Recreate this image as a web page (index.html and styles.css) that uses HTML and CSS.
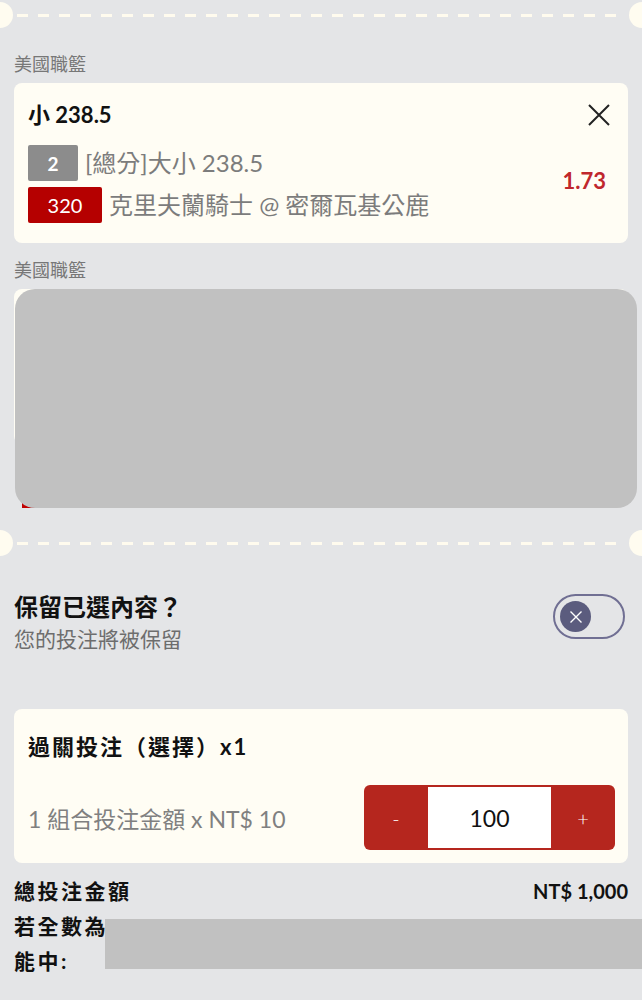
FILE: index.html
```html
<!DOCTYPE html>
<html lang="zh-Hant">
<head>
<meta charset="utf-8">
<link rel="stylesheet" href="styles.css">
</head>
<body>
<div class="divider"><span class="notch notch-l"></span><span class="dash"></span><span class="notch notch-r"></span></div>

<div class="section">
  <div class="league">美國職籃</div>
  <div class="card bet">
    <div class="bet-head">
      <div class="bet-title">小 238.5</div>
      <svg class="close" width="22" height="22" viewBox="0 0 22 22"><path d="M1 1 L21 21 M21 1 L1 21" stroke="#222" stroke-width="2" fill="none"/></svg>
    </div>
    <div class="bet-body">
      <div class="bet-rows">
        <div class="bet-row"><span class="badge badge-gray">2</span><span class="bet-text">[總分]大小 238.5</span></div>
        <div class="bet-row"><span class="badge badge-red">320</span><span class="bet-text">克里夫蘭騎士 @ 密爾瓦基公鹿</span></div>
      </div>
      <div class="odds">1.73</div>
    </div>
  </div>

  <div class="league league-2">美國職籃</div>
  <div class="masked">
    <div class="card bet">
      <div class="bet-head">
        <div class="bet-title">大 238.5</div>
      </div>
      <div class="bet-body">
        <div class="bet-rows">
          <div class="bet-row"><span class="badge badge-gray">2</span><span class="bet-text">[總分]大小 238.5</span></div>
        </div>
      </div>
    </div>
    <span class="peek"></span>
    <div class="mask"></div>
  </div>
</div>

<div class="divider divider-2"><span class="notch notch-l"></span><span class="dash"></span><span class="notch notch-r"></span></div>

<div class="section">
  <div class="keep">
    <div class="keep-text">
      <div class="keep-title">保留已選內容？</div>
      <div class="keep-sub">您的投注將被保留</div>
    </div>
    <div class="toggle">
      <span class="knob"><svg width="14" height="14" viewBox="0 0 14 14"><path d="M1.5 1.5 L12.5 12.5 M12.5 1.5 L1.5 12.5" stroke="#fff" stroke-width="1.4" fill="none"/></svg></span>
    </div>
  </div>

  <div class="card parlay">
    <div class="parlay-title">過關投注（選擇）x1</div>
    <div class="parlay-row">
      <div class="parlay-text">1 組合投注金額 x NT$ 10</div>
      <div class="stepper">
        <span class="step-btn">-</span>
        <span class="step-val">100</span>
        <span class="step-btn">+</span>
      </div>
    </div>
  </div>

  <div class="summary">
    <div class="sum-row"><span class="sum-label">總投注金額</span><span class="sum-val">NT$ 1,000</span></div>
    <div class="win">
      <div class="sum-label">若全數為</div>
      <div class="sum-label">能中:</div>
      <div class="win-mask"></div>
    </div>
  </div>
</div>
</body>
</html>
```

FILE: styles.css
```css
* { box-sizing: border-box; }
html, body {
  margin: 0;
  padding: 0;
  background: #e4e5e7;
  font-family: Lato, "Noto Sans CJK TC", sans-serif;
  color: #111;
  overflow: hidden;
}
.divider {
  height: 30px;
  display: flex;
  align-items: center;
}
.divider-2 { margin-top: 20px; }
.notch {
  width: 26px;
  height: 26px;
  border-radius: 50%;
  background: #fffcf0;
  flex: none;
}
.notch-l { margin-left: -13px; }
.notch-r { margin-right: -13px; }
.dash {
  flex: 1;
  height: 3px;
  margin: 0 4px;
  background: repeating-linear-gradient(90deg, #fffbee 0 11px, transparent 11px 21px);
}
.section { padding: 0 14px; }
.league {
  font-size: 18px;
  line-height: 20px;
  color: #777;
  margin-top: 24px;
  margin-bottom: 9px;
}
.league-2 { margin-top: 17px; }
.card {
  background: #fffdf4;
  border-radius: 8px;
}
.bet { padding: 18px 18px 20px 14px; }
.bet-head {
  display: flex;
  justify-content: space-between;
  align-items: center;
  height: 28px;
}
.bet-title {
  font-size: 22px;
  font-weight: 700;
  line-height: 28px;
}
.bet-body {
  display: flex;
  align-items: center;
  justify-content: space-between;
  margin-top: 16px;
}
.bet-rows { display: flex; flex-direction: column; gap: 6px; }
.bet-row { display: flex; align-items: center; height: 36px; }
.badge {
  height: 36px;
  display: flex;
  align-items: center;
  justify-content: center;
  color: #fff;
  font-size: 20px;
  border-radius: 2px;
  flex: none;
}
.badge-gray { width: 50px; background: #8c8c8c; font-weight: 700; font-size: 19px; }
.badge-red { width: 74px; background: #b50000; }
.bet-text {
  margin-left: 7px;
  font-size: 24px;
  line-height: 36px;
  color: #7c7c7c;
  white-space: nowrap;
}
.odds {
  font-size: 22px;
  font-weight: 700;
  color: #c0272d;
  margin-right: 4px;
  margin-bottom: 7px;
}
.masked {
  position: relative;
  height: 219px;
}
.masked .card { height: 155px; overflow: hidden; }
.peek {
  position: absolute;
  left: 8px;
  bottom: 0;
  width: 14px;
  height: 8px;
  background: #c00000;
}
.mask {
  position: absolute;
  top: 0;
  bottom: 0;
  left: 1px;
  right: -9px;
  background: #c1c1c1;
  border-radius: 20px;
}
.keep {
  display: flex;
  justify-content: space-between;
  align-items: flex-start;
  margin-top: 34px;
}
.keep-title {
  font-size: 24px;
  font-weight: 700;
  line-height: 30px;
}
.keep-sub {
  font-size: 21px;
  line-height: 26px;
  margin-top: 4px;
  color: #6d6d6d;
}
.toggle {
  width: 72px;
  height: 45px;
  margin-top: 2px;
  margin-right: 3px;
  border: 2px solid #706f93;
  border-radius: 23px;
  display: flex;
  align-items: center;
  padding-left: 5px;
}
.knob {
  width: 31px;
  height: 31px;
  border-radius: 50%;
  background: #5b5c7e;
  display: flex;
  align-items: center;
  justify-content: center;
}
.parlay {
  margin-top: 57px;
  padding: 24px 13px 13px 14px;
}
.parlay-title {
  font-size: 22px;
  font-weight: 700;
  line-height: 28px;
  letter-spacing: 2px;
}
.parlay-row {
  display: flex;
  justify-content: space-between;
  align-items: center;
  margin-top: 24px;
}
.parlay-text {
  font-size: 23px;
  color: #808080;
}
.stepper {
  display: flex;
  background: #b5261e;
  border-radius: 6px;
  padding: 2px 0;
  height: 65px;
}
.step-btn {
  width: 64px;
  display: flex;
  align-items: center;
  justify-content: center;
  color: #fff;
  font-size: 20px;
  font-weight: 300;
}
.step-val {
  width: 123px;
  background: #fff;
  display: flex;
  align-items: center;
  justify-content: center;
  font-size: 23px;
  color: #111;
}
.summary { margin-top: 10px; }
.sum-row {
  display: flex;
  justify-content: space-between;
  align-items: center;
}
.sum-label {
  font-size: 21px;
  font-weight: 700;
  line-height: 35px;
  letter-spacing: 2.5px;
}
.sum-val {
  font-size: 20px;
  font-weight: 700;
}
.win { position: relative; }
.win-mask {
  position: absolute;
  left: 91px;
  right: -14px;
  top: 11px;
  height: 50px;
  background: #c1c1c1;
}
```
